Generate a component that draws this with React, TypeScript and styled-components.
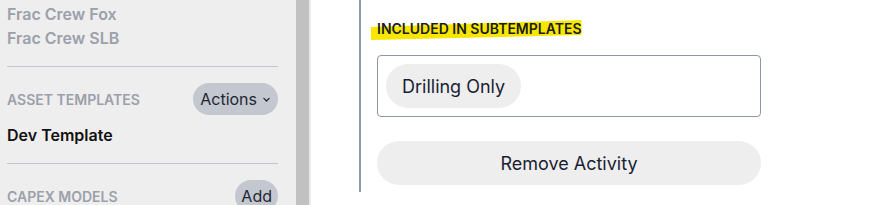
import React from "react";
import styled, { createGlobalStyle } from "styled-components";

const GlobalStyle = createGlobalStyle`
  html, body {
    margin: 0;
    padding: 0;
    background: #ffffff;
    font-family: Inter, "Noto Sans", sans-serif;
  }
`;

const Page = styled.div`
  display: flex;
  width: 872px;
  height: 205px;
  overflow: hidden;
`;

const Sidebar = styled.aside`
  width: 296px;
  flex-shrink: 0;
  box-sizing: border-box;
  padding: 2px 18px 0 7px;
  background: #eeeeee;
`;

const ScrollTrack = styled.div`
  width: 13px;
  flex-shrink: 0;
  background: #c1c1c1;
  border-right: 2px solid #e9e9e9;
`;

const Main = styled.main`
  flex: 1;
  padding-left: 48px;
`;

const Panel = styled.section`
  width: 384px;
  height: 192px;
  border-left: 2px solid #9097a6;
  padding-left: 16px;
  box-sizing: content-box;
`;

const CrewList = styled.ul`
  list-style: none;
  margin: 0 0 16px;
  padding: 0;
`;

const CrewItem = styled.li`
  font-size: 16px;
  line-height: 24px;
  font-weight: 600;
  color: #9ba0aa;
`;

const Divider = styled.hr`
  margin: 0;
  border: none;
  border-top: 1px solid #c3c6ce;
`;

const SectionHeader = styled.div`
  display: flex;
  align-items: center;
  justify-content: space-between;
  padding-top: 16px;
  height: 32px;
`;

const SectionTitle = styled.span`
  font-size: 14px;
  font-weight: 600;
  text-transform: uppercase;
  color: #9ba0aa;
`;

const PillButton = styled.button<{ $pad?: number }>`
  display: inline-flex;
  align-items: center;
  gap: 5px;
  height: 32px;
  padding: 0 ${(p) => p.$pad ?? 8}px;
  border: none;
  border-radius: 16px;
  background: #c3c7cf;
  color: #222632;
  font-family: inherit;
  font-size: 16px;
  font-weight: 400;
`;

const TemplateName = styled.div`
  margin: 8px 0 16px;
  font-size: 16px;
  line-height: 24px;
  font-weight: 600;
  color: #111111;
`;

const HighlightLabel = styled.h4`
  position: relative;
  display: inline-block;
  margin: 20px 0 0;
  font-size: 14px;
  line-height: 17px;
  font-weight: 600;
  text-transform: uppercase;
  color: #1b1b1b;
  z-index: 0;

  &::before {
    content: "";
    position: absolute;
    left: -6px;
    right: 0;
    top: 0;
    bottom: -3px;
    background: #f7e700;
    clip-path: polygon(0 35%, 100% 0, 100% 75%, 0 100%);
    z-index: -1;
  }
`;

const TagBox = styled.div`
  display: flex;
  gap: 8px;
  margin-top: 17px;
  padding: 8px;
  height: 44px;
  border: 1px solid #8f96a5;
  border-radius: 4px;
`;

const Tag = styled.span`
  display: inline-flex;
  align-items: center;
  height: 44px;
  padding: 0 16px;
  border-radius: 22px;
  background: #eeeeee;
  font-size: 18px;
  color: #1a1e33;
`;

const WideButton = styled.button`
  display: block;
  width: 100%;
  height: 44px;
  margin-top: 24px;
  border: none;
  border-radius: 22px;
  background: #eeeeee;
  font-family: inherit;
  font-size: 18px;
  color: #1a1e33;
`;

const Chevron = () => (
  <svg width="9" height="9" viewBox="0 0 24 24" fill="none" stroke="#222632" strokeWidth="3.5" strokeLinecap="round" strokeLinejoin="round">
    <path d="M5 9l7 7 7-7" />
  </svg>
);

export default function App() {
  return (
    <Page>
      <GlobalStyle />
      <Sidebar>
        <CrewList>
          <CrewItem>Frac Crew Fox</CrewItem>
          <CrewItem>Frac Crew SLB</CrewItem>
        </CrewList>
        <Divider />
        <SectionHeader>
          <SectionTitle>Asset Templates</SectionTitle>
          <PillButton $pad={7}>
            Actions <Chevron />
          </PillButton>
        </SectionHeader>
        <TemplateName>Dev Template</TemplateName>
        <Divider />
        <SectionHeader>
          <SectionTitle>Capex Models</SectionTitle>
          <PillButton $pad={6}>Add</PillButton>
        </SectionHeader>
      </Sidebar>
      <ScrollTrack />
      <Main>
        <Panel>
          <HighlightLabel>Included in subtemplates</HighlightLabel>
          <TagBox>
            <Tag>Drilling Only</Tag>
          </TagBox>
          <WideButton>Remove Activity</WideButton>
        </Panel>
      </Main>
    </Page>
  );
}
